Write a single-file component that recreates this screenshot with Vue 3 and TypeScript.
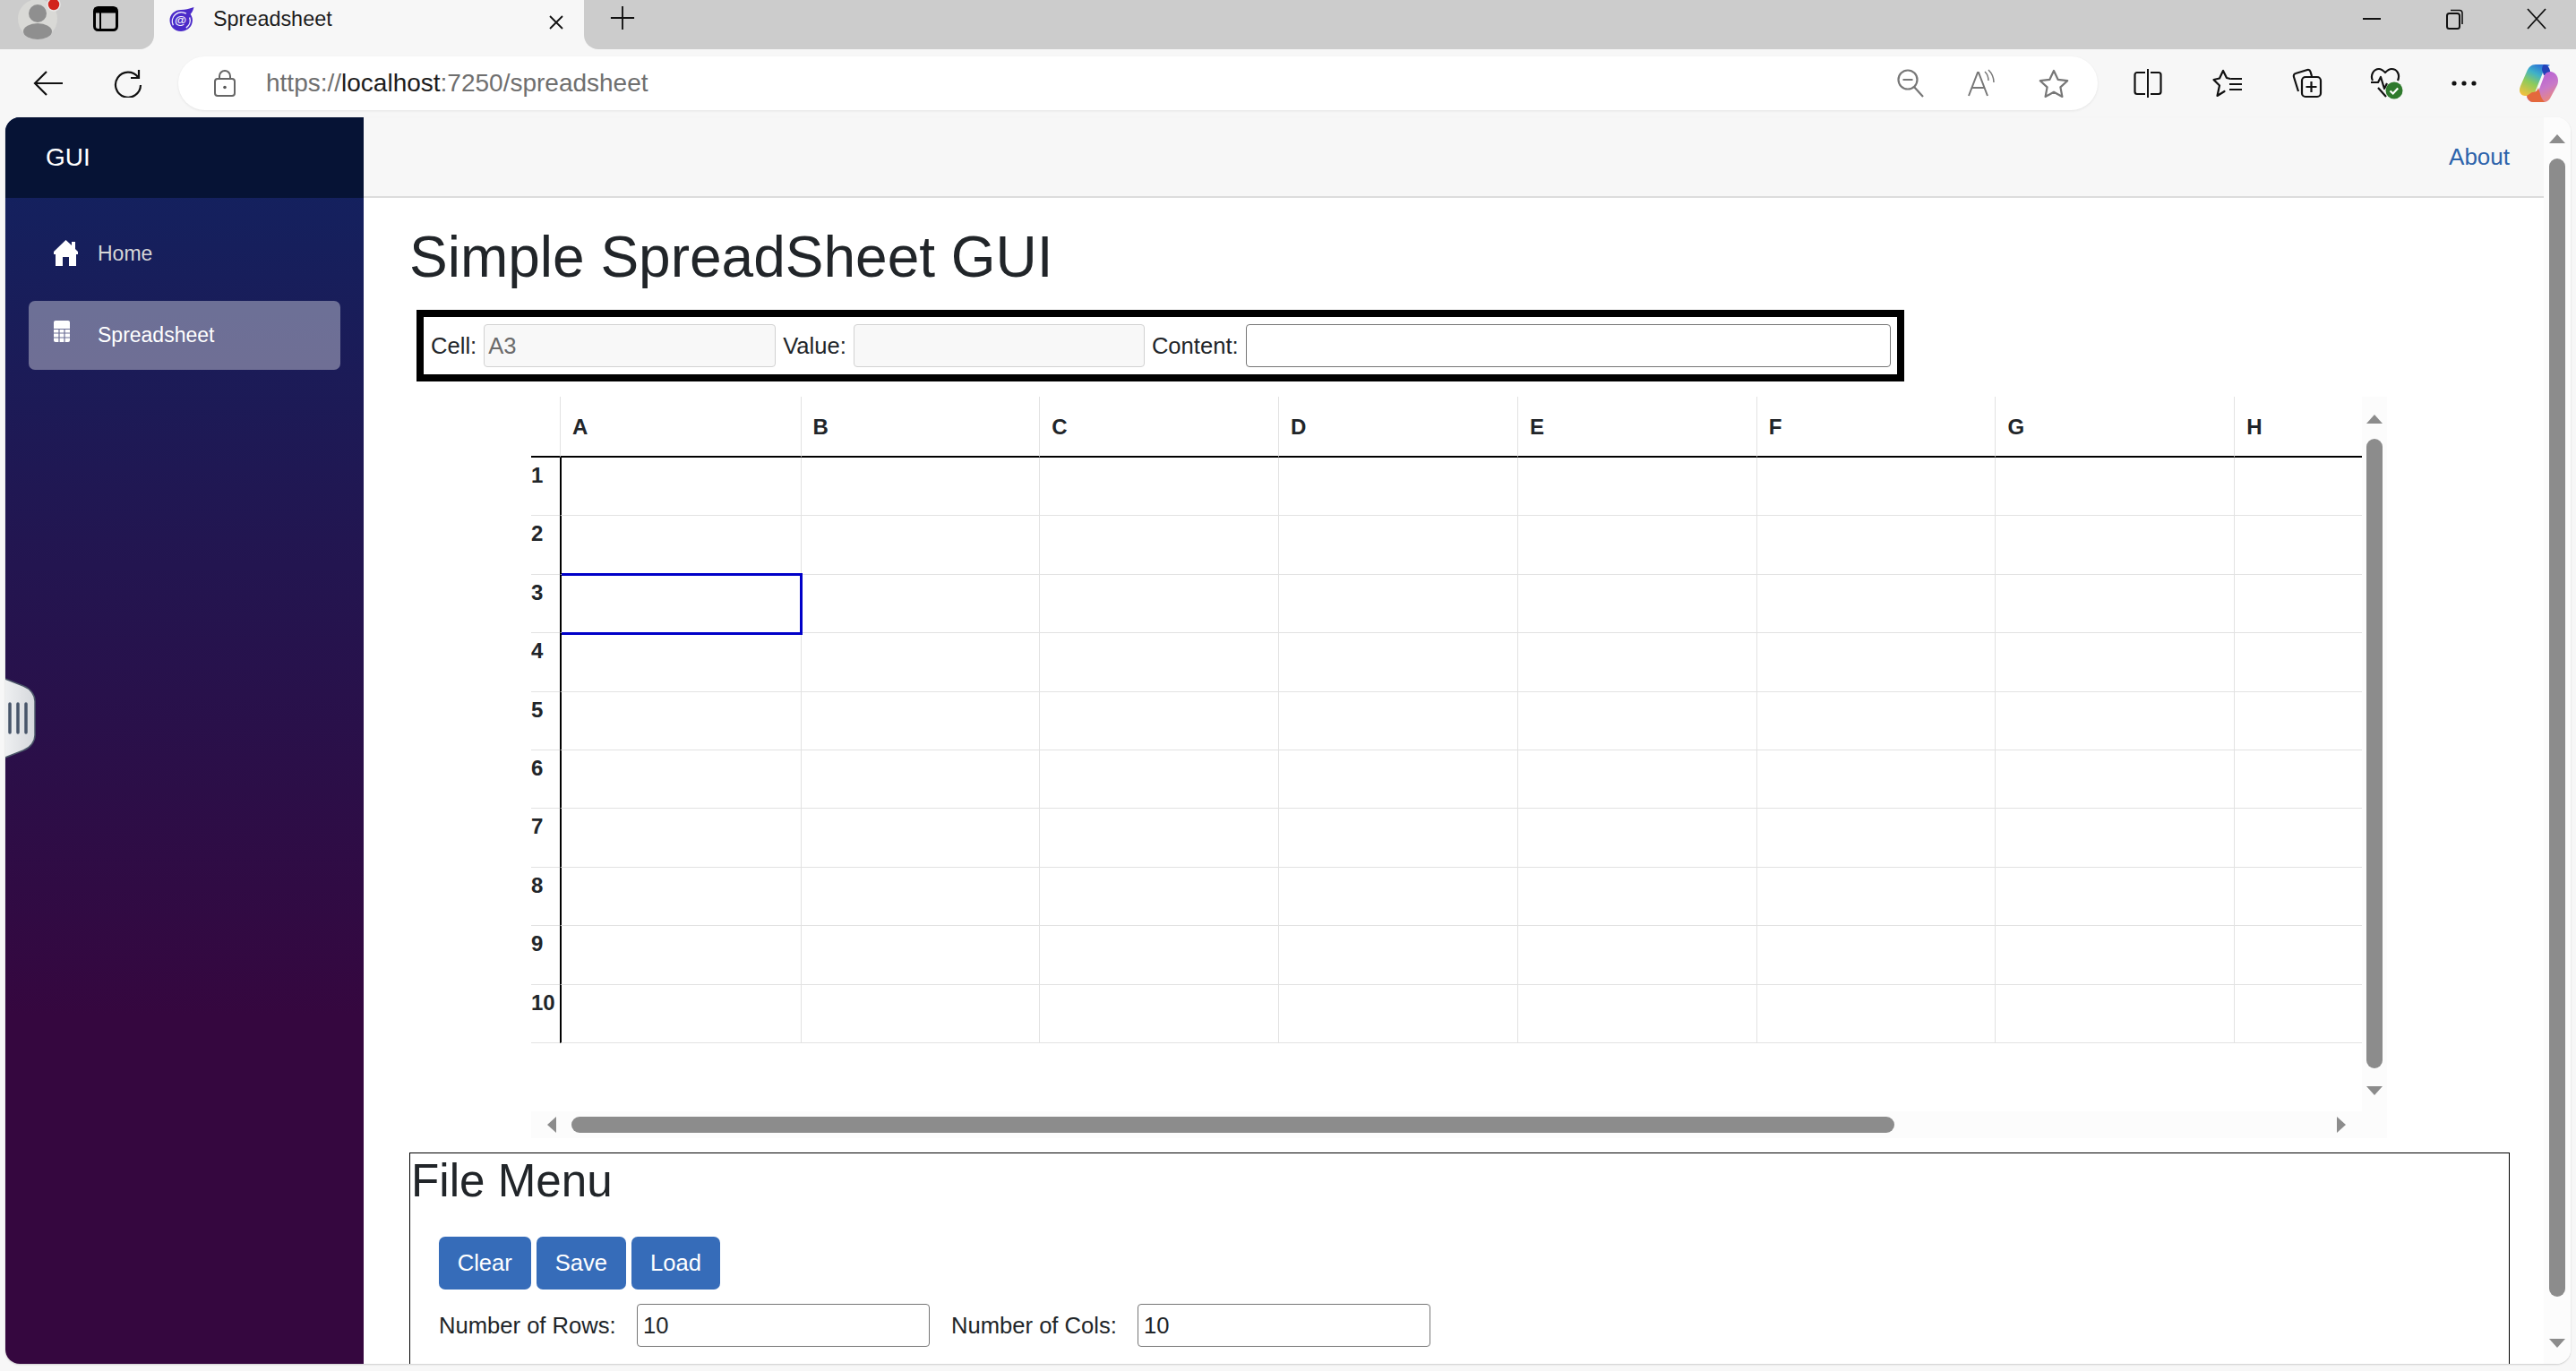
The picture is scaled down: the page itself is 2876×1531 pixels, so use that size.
<script setup lang="ts">
const columns = ["A", "B", "C", "D", "E", "F", "G", "H"];
const rows = [1, 2, 3, 4, 5, 6, 7, 8, 9, 10];
const selected = { col: "A", row: 3 };
</script>

<template>
  <div class="browser">
    <div class="tabstrip">
      <div class="strip-left">
        <svg class="avatar" viewBox="0 0 50 46">
          <circle cx="22" cy="21" r="22" fill="#d9d9d6" />
          <circle cx="22" cy="15" r="10" fill="#8f8f8f" />
          <ellipse cx="22" cy="35" rx="16" ry="9" fill="#8f8f8f" />
          <circle cx="40" cy="5" r="7" fill="#d2241c" stroke="#e8e8e8" stroke-width="1.5" />
        </svg>
        <svg class="tab-actions" viewBox="0 0 28 28">
          <rect x="1.5" y="1.5" width="25" height="25" rx="4" fill="none" stroke="#000" stroke-width="3" />
          <rect x="1.5" y="1.5" width="25" height="6" fill="#000" />
          <path d="M8 7v19" stroke="#000" stroke-width="2" />
        </svg>
      </div>
      <div class="tab">
        <svg class="favicon" viewBox="0 0 30 28">
          <path d="M14 3c5 0 9-1 15-3-1 4-2 6-4 8 2 3 3 6 2 10-1 6-7 10-13 10C6 28 1 22 1 15 1 8 7 3 14 3z" fill="#4b2bc9" />
          <path d="M5 21A10.500 10.500 0 0 1 20 7.500M24 12a10.500 10.500 0 0 1-4 12" fill="none" stroke="#f3f1fd" stroke-width="1.5" />
          <text x="13.5" y="20" text-anchor="middle" class="favicon-at">@</text>
        </svg>
        <span class="tab-title">Spreadsheet</span>
        <svg class="tab-close" viewBox="0 0 18 18">
          <path d="M2 2l14 14M16 2L2 16" stroke="#111" stroke-width="1.8" />
        </svg>
      </div>
      <div class="strip-right">
        <svg class="new-tab" viewBox="0 0 30 30">
          <path d="M15 1v28M1 15h28" stroke="#111" stroke-width="2" />
        </svg>
        <div class="window-controls">
          <svg class="win-btn" viewBox="0 0 24 24"><path d="M2 12h20" stroke="#111" stroke-width="2" /></svg>
          <svg class="win-btn" viewBox="0 0 24 24">
            <rect x="4" y="6" width="14" height="17" rx="2.5" fill="none" stroke="#111" stroke-width="2" />
            <path d="M8 2.5h10a3 3 0 0 1 3 3V18" fill="none" stroke="#111" stroke-width="1.6" />
          </svg>
          <svg class="win-btn" viewBox="0 0 24 24"><path d="M2 1l20 22M22 1L2 23" stroke="#111" stroke-width="1.8" /></svg>
        </div>
      </div>
    </div>

    <div class="toolbar">
      <button class="tool">
        <svg width="34" height="30" viewBox="0 0 34 30"><path d="M15 2L2 15l13 13M2 15h31" fill="none" stroke="#111" stroke-width="2.2" /></svg>
      </button>
      <button class="tool">
        <svg width="32" height="32" viewBox="0 0 32 32"><path d="M27 9a14 14 0 1 0 3 9M28 1v9h-9" fill="none" stroke="#111" stroke-width="2.2" /></svg>
      </button>
      <div class="address">
        <svg class="lock" viewBox="0 0 24 30">
          <path d="M6 10V7a6 6 0 0 1 12 0v3" fill="none" stroke="#666" stroke-width="2" />
          <rect x="1" y="10" width="22" height="19" rx="3" fill="none" stroke="#666" stroke-width="2" />
          <circle cx="12" cy="19.5" r="1.8" fill="#555" />
        </svg>
        <span class="url">https://<b>localhost</b>:7250/spreadsheet</span>
        <span class="address-gap" />
        <span class="addr-icon">
          <svg width="30" height="32" viewBox="0 0 30 32"><circle cx="12" cy="12" r="10.5" fill="none" stroke="#777" stroke-width="2.2" /><path d="M6.5 12h11M19 20l10 11" fill="none" stroke="#777" stroke-width="2.2" /></svg>
        </span>
        <span class="addr-icon">
          <svg width="32" height="32" viewBox="0 0 32 32"><path d="M1 30L11 4h1l10 26M5 21h14" fill="none" stroke="#777" stroke-width="2" /><path d="M19 3c3 3 4 6 4 10M23 1c4 4 6 8 6 14" fill="none" stroke="#777" stroke-width="1.5" /></svg>
        </span>
        <span class="addr-icon">
          <svg width="34" height="32" viewBox="0 0 34 32"><path d="M17 2l4.600 9.800 10.600 1.400-7.800 7.200 2 10.600-9.400-5.200-9.400 5.200 2-10.600-7.800-7.200 10.600-1.400z" fill="none" stroke="#777" stroke-width="2.200" stroke-linejoin="round" /></svg>
        </span>
      </div>
      <div class="tool-group">
        <button class="tool">
          <svg width="32" height="32" viewBox="0 0 32 32"><path d="M13 4H4a2.500 2.500 0 0 0-2.500 2.500v19A2.500 2.500 0 0 0 4 28h9M19 4h9a2.500 2.500 0 0 1 2.500 2.500v19A2.500 2.500 0 0 1 28 28h-9" fill="none" stroke="#111" stroke-width="2.200" /><path d="M16 0v32" stroke="#111" stroke-width="2" /></svg>
        </button>
        <button class="tool">
          <svg width="34" height="32" viewBox="0 0 34 32"><path d="M20 11l-4-1-4-8-4 8.500-6.500 1.500 6.500 6.500L5.500 30l8-5" fill="none" stroke="#111" stroke-width="2.200" stroke-linejoin="round" stroke-linecap="round" /><path d="M21 11h12M19 17h14M19 23h14" fill="none" stroke="#111" stroke-width="2.200" /></svg>
        </button>
        <button class="tool">
          <svg width="34" height="34" viewBox="0 0 34 34"><path d="M7 26L2 10a3 3 0 0 1 2-4l13-4a3 3 0 0 1 3.500 2l1.500 5" fill="none" stroke="#111" stroke-width="2.200" /><rect x="11" y="10" width="21" height="22" rx="4" fill="#f7f7f7" stroke="#111" stroke-width="2.200" /><path d="M21.500 15v12M15.500 21h12" stroke="#111" stroke-width="2.200" /></svg>
        </button>
        <button class="tool">
          <svg width="38" height="36" viewBox="0 0 38 36"><path d="M3 15C0 9 4 2 10 2c3 0 5 2 7 4 2-2 4-4 7-4 6 0 10 6 7 13M1 17h8l3-6 4 13 3-6M9 23l9 10" fill="none" stroke="#111" stroke-width="2.200" stroke-linejoin="round" /><circle cx="27" cy="26" r="9.500" fill="#2f7a2d" /><path d="M22.500 26.500l3.200 3 5.500-6" fill="none" stroke="#fff" stroke-width="2.200" /></svg>
        </button>
        <button class="tool tool--dots">
          <svg width="28" height="6" viewBox="0 0 28 6"><circle cx="3" cy="3" r="2.600" fill="#111" /><circle cx="14" cy="3" r="2.600" fill="#111" /><circle cx="25" cy="3" r="2.600" fill="#111" /></svg>
        </button>
        <button class="tool tool--copilot">
          <svg width="44" height="42" viewBox="0 0 44 42">
            <defs>
              <linearGradient id="cop-left" x1="0.7" y1="0" x2="0.2" y2="1">
                <stop offset="0" stop-color="#2a6fd8" />
                <stop offset="0.3" stop-color="#3fb2c8" />
                <stop offset="0.6" stop-color="#8ecb5a" />
                <stop offset="1" stop-color="#f0c040" />
              </linearGradient>
              <linearGradient id="cop-right" x1="0.3" y1="0" x2="0.8" y2="1">
                <stop offset="0" stop-color="#b25ad8" />
                <stop offset="0.55" stop-color="#c879c8" />
                <stop offset="1" stop-color="#f08a70" />
              </linearGradient>
            </defs>
            <path d="M30 0c-1 0-3 0-4 0H19C14 0 11 3 9 8L2 24c-3 7 1 11 5 11h6c3 0 5-3 6-6l8-20c1-4 3-6 8-8-1-1-3-1-5-1z" fill="url(#cop-left)" />
            <path d="M28 0c4 0 6 3 7 7l1 5h-8l-2-6c0-3 1-5 2-6z" fill="#2442b8" />
            <path d="M36 8c5 1 8 5 8 10 0 3-1 5-2 7l-6 11c-2 4-4 6-9 6H16c-3 0-6-2-7-6h5c4 0 7-2 8-6l6-16c1-4 4-6 8-6z" fill="url(#cop-right)" />
            <path d="M15 31c4 0 6-2 7-5l2 7c1 4 3 7 5 9H16c-3 0-6-3-7-7z" fill="#e4683c" />
          </svg>
        </button>
      </div>
    </div>

    <div class="window">
      <aside class="sidebar">
        <div class="brand">GUI</div>
        <nav class="nav">
          <a class="nav-link">
            <svg class="nav-icon nav-icon--home" viewBox="0 0 27 29">
              <path d="M13.500 0L20 6V2h4v8l3 3v3h-2v13h-8V19h-7v10H2V16H0v-3z" fill="#fff" />
            </svg>
            <span>Home</span>
          </a>
          <a class="nav-link nav-link--active">
            <svg class="nav-icon nav-icon--sheet" viewBox="0 0 18 24">
              <rect width="18" height="24" rx="2" fill="#fff" />
              <path d="M0 9.500h18M0 14h18M0 19h18M6 9.500V24M12 9.500V24" stroke="#6d7097" stroke-width="1.200" />
            </svg>
            <span>Spreadsheet</span>
          </a>
        </nav>
      </aside>

      <div class="page">
        <header class="top-row">
          <a class="about">About</a>
        </header>
        <main class="content">
          <h1 class="title">Simple SpreadSheet GUI</h1>

          <div class="cell-box">
            <label class="field-label">Cell:</label>
            <input class="field field--cell" value="A3" disabled />
            <label class="field-label">Value:</label>
            <input class="field field--value" disabled />
            <label class="field-label">Content:</label>
            <input class="field field--content" />
          </div>

          <div class="sheet-wrap">
            <div class="sheet">
              <div class="corner" />
              <div v-for="col in columns" :key="col" class="col-head">{{ col }}</div>
              <template v-for="row in rows" :key="row">
                <div class="row-head">{{ row }}</div>
                <div
                  v-for="col in columns"
                  :key="col"
                  :class="['cell', { 'cell--selected': col === selected.col && row === selected.row }]"
                />
              </template>
            </div>
            <div class="vbar vbar--sheet">
              <svg class="arrow" viewBox="0 0 18 10"><path d="M9 0l9 10H0z" /></svg>
              <div class="thumb" />
              <svg class="arrow arrow--end" viewBox="0 0 18 10"><path d="M0 0h18L9 10z" /></svg>
            </div>
            <div class="hbar">
              <svg class="arrow-h" viewBox="0 0 10 18"><path d="M10 0v18L0 9z" /></svg>
              <div class="thumb-h" />
              <svg class="arrow-h arrow-h--end" viewBox="0 0 10 18"><path d="M0 0l10 9-10 9z" /></svg>
            </div>
            <div class="sheet-corner" />
          </div>

          <section class="file-menu">
            <h2 class="file-title">File Menu</h2>
            <div class="actions">
              <button class="btn">Clear</button>
              <button class="btn">Save</button>
              <button class="btn">Load</button>
            </div>
            <div class="size-row">
              <label class="size-label">Number of Rows:</label>
              <input class="field field--size" value="10" />
              <label class="size-label size-label--cols">Number of Cols:</label>
              <input class="field field--size" value="10" />
            </div>
          </section>
        </main>
      </div>

      <div class="vbar vbar--page">
        <svg class="arrow" viewBox="0 0 18 10"><path d="M9 0l9 10H0z" /></svg>
        <div class="thumb" />
        <svg class="arrow arrow--end" viewBox="0 0 18 10"><path d="M0 0h18L9 10z" /></svg>
      </div>

      <svg class="handle" viewBox="0 0 40 94">
        <defs>
          <linearGradient id="handle-fill" x1="0" y1="0" x2="1" y2="0">
            <stop offset="0" stop-color="#f4f5f6" />
            <stop offset="1" stop-color="#d5d8dc" />
          </linearGradient>
        </defs>
        <path d="M-2 0l28 11c8 3 13 10 13 17v38c0 7-5 14-13 17L-2 94z" fill="url(#handle-fill)" stroke="#4a5568" stroke-width="1.500" />
        <path d="M11 31v32M20 31v32M29 31v32" stroke="#48566a" stroke-width="3.500" stroke-linecap="round" />
      </svg>
    </div>
  </div>
</template>

<style>
html,
body {
  margin: 0;
  background: #f7f7f7;
  overflow: hidden;
}
</style>

<style scoped>
* {
  box-sizing: border-box;
}

.browser {
  width: 2876px;
  height: 1531px;
  display: flex;
  flex-direction: column;
  background: #f7f7f7;
  font-family: "Liberation Sans", Arial, sans-serif;
  font-size: 25.6px;
  color: #212529;
  overflow: hidden;
}

/* Tab strip */
.tabstrip {
  height: 55px;
  display: flex;
  flex-shrink: 0;
}

.strip-left {
  width: 172px;
  background: #cccccc;
  border-bottom-right-radius: 16px;
  display: flex;
  align-items: flex-start;
  padding-left: 20px;
}

.avatar {
  width: 50px;
  height: 46px;
}

.tab-actions {
  width: 28px;
  height: 28px;
  margin: 7px 0 0 34px;
}

.tab {
  width: 480px;
  display: flex;
  align-items: center;
  padding-left: 16px;
}

.favicon {
  width: 30px;
  height: 27px;
  margin-bottom: 13px;
}

.favicon-at {
  font-family: "Liberation Sans", Arial, sans-serif;
  font-size: 14px;
  font-weight: 700;
  fill: #f3f1fd;
}

.tab-title {
  margin-left: 20px;
  margin-bottom: 13px;
  font-size: 23.4px;
  color: #1c1c1c;
}

.tab-close {
  width: 18px;
  height: 18px;
  margin-left: auto;
  margin-right: 22px;
  margin-bottom: 6px;
}

.strip-right {
  flex: 1;
  background: #cccccc;
  border-bottom-left-radius: 16px;
  display: flex;
  align-items: flex-start;
  padding-left: 29px;
}

.new-tab {
  width: 28px;
  height: 28px;
  margin-top: 6px;
}

.window-controls {
  margin-left: auto;
  display: flex;
  padding-right: 32px;
}

.win-btn {
  width: 24px;
  height: 24px;
  margin: 9px 0 0 68px;
}

/* Toolbar */
.toolbar {
  height: 76px;
  display: flex;
  align-items: flex-start;
  padding: 8px 0 0 9px;
  flex-shrink: 0;
}

.tool {
  width: 89px;
  height: 60px;
  display: flex;
  align-items: center;
  justify-content: center;
  border: 0;
  padding: 0;
  background: none;
}

.tool--dots {
  width: 84px;
}

.tool--copilot {
  width: 82px;
}

.address {
  width: 2143px;
  height: 60px;
  margin-left: 12px;
  display: flex;
  align-items: center;
  padding: 0 9px 0 40px;
  background: #fff;
  border-radius: 30px;
  box-shadow: 0 1px 3px rgba(0, 0, 0, 0.08);
}

.lock {
  width: 24px;
  height: 30px;
}

.url {
  margin-left: 34px;
  font-size: 28px;
  color: #6f6f6f;
}

.url b {
  font-weight: 400;
  color: #1c1c1c;
}

.address-gap {
  flex: 1;
}

.addr-icon {
  width: 80px;
  display: flex;
  justify-content: center;
}

.tool-group {
  display: flex;
  margin-left: 11px;
}

/* App window */
.window {
  position: relative;
  flex: 1;
  min-height: 0;
  margin: 0 6px 8px;
  display: flex;
  background: #fff;
  border-radius: 16px;
  box-shadow: 0 1px 2px rgba(0, 0, 0, 0.18);
  overflow: hidden;
}

.sidebar {
  width: 400px;
  flex-shrink: 0;
  background: linear-gradient(180deg, #112361 0%, #35073f 72%);
  color: #fff;
}

.brand {
  height: 90px;
  padding-left: 45px;
  display: flex;
  align-items: center;
  font-size: 28px;
  background: #061335;
}

.nav {
  padding: 24px 26px 0;
}

.nav-link {
  height: 77px;
  display: flex;
  align-items: center;
  padding-left: 28px;
  border-radius: 7px;
  font-size: 23px;
  color: #d7d7d7;
}

.nav-link--active {
  margin-top: 14px;
  background: rgba(255, 255, 255, 0.37);
  color: #fff;
}

.nav-icon {
  flex-shrink: 0;
}

.nav-icon--home {
  width: 27px;
  height: 29px;
  margin-right: 22px;
  margin-top: -2px;
}

.nav-icon--sheet {
  width: 18px;
  height: 24px;
  margin-right: 31px;
  margin-top: -10px;
}

/* Page */
.page {
  flex: 1;
  min-width: 0;
  display: flex;
  flex-direction: column;
}

.top-row {
  height: 90px;
  flex-shrink: 0;
  display: flex;
  align-items: center;
  justify-content: flex-end;
  padding-right: 38px;
  background: #f7f7f7;
  border-bottom: 2px solid #dcdcdc;
}

.about {
  font-size: 26px;
  color: #2c63ab;
}

.content {
  flex: 1;
  min-height: 0;
  padding: 26px 38px 0 51px;
  overflow: hidden;
}

.title {
  margin: 0 0 19px;
  font-size: 64px;
  font-weight: 400;
  line-height: 80px;
}

.cell-box {
  width: 1661px;
  height: 80px;
  margin-left: 8px;
  padding: 0 7px 0 8px;
  display: flex;
  align-items: center;
  gap: 8px;
  border: 8px solid #000;
}

.field-label {
  white-space: nowrap;
}

.field {
  height: 48px;
  padding: 0 4px;
  border: 1.500px solid #767676;
  border-radius: 4px;
  background: #fff;
  font: inherit;
  color: #212529;
}

.field:disabled {
  background: #f8f8f8;
  border-color: #d2d2d2;
  color: #6b6b6b;
  opacity: 1;
}

.field--cell {
  width: 326px;
}

.field--value {
  width: 325px;
}

.field--content {
  flex: 1;
  min-width: 0;
}

/* Spreadsheet */
.sheet-wrap {
  width: 2072px;
  margin: 17px 0 16px 136px;
  display: grid;
  grid-template-columns: 2044px 28px;
  grid-template-rows: 798px 30px;
}

.sheet {
  display: grid;
  grid-template-columns: 32px 268.500px repeat(7, 266.800px);
  grid-template-rows: 68px repeat(10, 65.400px);
  align-content: start;
  overflow: hidden;
}

.corner,
.col-head {
  border-bottom: 2.500px solid #000;
}

.col-head {
  display: flex;
  align-items: center;
  padding: 2px 0 0 13px;
  font-size: 24px;
  font-weight: 700;
  border-left: 1.500px solid #e2e2e2;
}

.row-head {
  padding-top: 5px;
  font-size: 24px;
  font-weight: 700;
  line-height: 30px;
  border-bottom: 1.500px solid #e2e2e2;
  white-space: nowrap;
}

.cell {
  border-bottom: 1.500px solid #e2e2e2;
  border-left: 1.500px solid #e2e2e2;
}

.cell:nth-child(9n + 2) {
  border-left: 2.500px solid #000;
}

.cell--selected {
  position: relative;
}

.cell--selected::after {
  content: "";
  position: absolute;
  inset: -2px -2px -3px 0;
  border: 3px solid #0000c8;
  border-left: 0;
}

.vbar {
  display: flex;
  flex-direction: column;
  background: #fcfcfc;
}

.vbar--sheet {
  padding: 20px 0 0 5px;
}

.vbar--sheet .thumb {
  height: 703px;
  margin-top: 17px;
}

.vbar--sheet .arrow--end {
  margin-top: 20px;
}

.vbar--page {
  width: 30px;
  flex-shrink: 0;
  padding: 19px 0 0 6px;
}

.vbar--page .thumb {
  height: 1271px;
  margin-top: 17px;
}

.vbar--page .arrow--end {
  margin-top: 47px;
}

.arrow {
  width: 18px;
  height: 10px;
  fill: #8c8c8c;
  flex-shrink: 0;
}

.thumb {
  width: 18px;
  flex-shrink: 0;
  background: #8c8c8c;
  border-radius: 9px;
}

.hbar {
  display: flex;
  align-items: center;
  padding-left: 18px;
  background: #fcfcfc;
}

.arrow-h {
  width: 10px;
  height: 18px;
  fill: #8c8c8c;
  flex-shrink: 0;
}

.arrow-h--end {
  margin-left: 494px;
}

.thumb-h {
  width: 1477px;
  height: 18px;
  margin-left: 17px;
  flex-shrink: 0;
  background: #8c8c8c;
  border-radius: 9px;
}

.sheet-corner {
  background: #fcfcfc;
}

/* File menu */
.file-menu {
  width: 2345px;
  height: 320px;
  border: 1px solid #000;
  padding: 0 0 0 32px;
}

.file-title {
  margin: -1px 0 30px -31px;
  font-size: 51.200px;
  font-weight: 400;
  line-height: 64px;
}

.actions {
  display: flex;
  gap: 6.500px;
}

.btn {
  height: 59px;
  padding: 0 20.700px;
  border: 0;
  border-radius: 7px;
  background: #366cb9;
  color: #fff;
  font: inherit;
}

.size-row {
  display: flex;
  align-items: center;
  margin-top: 16px;
}

.size-label {
  width: 221px;
  white-space: nowrap;
}

.size-label--cols {
  width: 208px;
  margin-left: 24px;
}

.field--size {
  width: 327px;
  padding-left: 6px;
}

/* Sidebar handle */
.handle {
  position: absolute;
  left: -6px;
  top: 624px;
  width: 40px;
  height: 94px;
}
</style>
